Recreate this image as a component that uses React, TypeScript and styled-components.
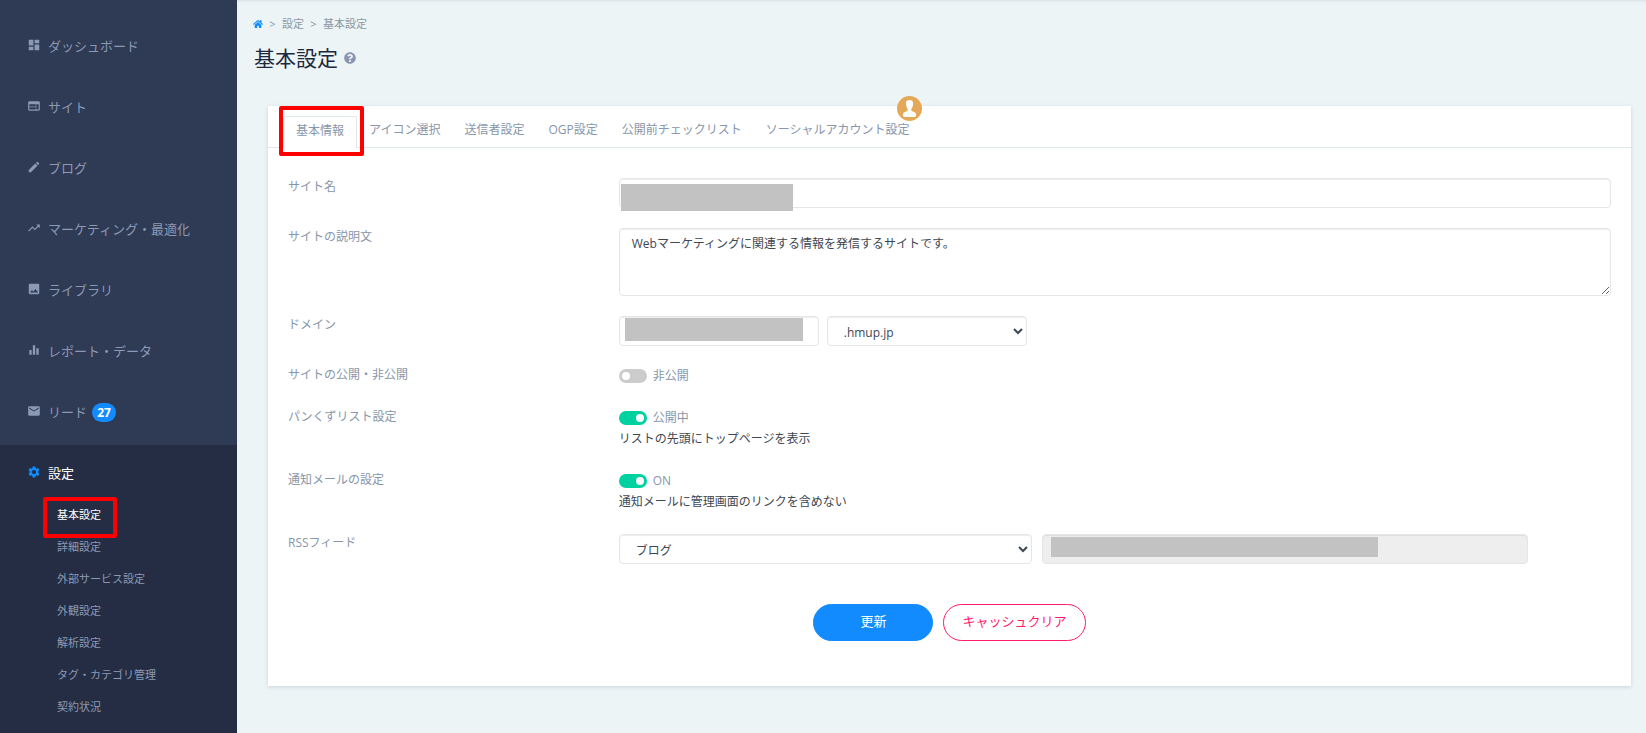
import React from "react";
import styled, { createGlobalStyle, css } from "styled-components";
import {
  MdDashboard,
  MdWeb,
  MdEdit,
  MdTrendingUp,
  MdPhoto,
  MdEqualizer,
  MdEmail,
  MdSettings,
} from "react-icons/md";
import { FaHome, FaQuestionCircle } from "react-icons/fa";

const GlobalStyle = createGlobalStyle`
  *, *::before, *::after { box-sizing: border-box; }
  body {
    margin: 0;
    background: #ecf4f6;
    color: #3d4853;
    font: 12px/18px "Open Sans", "Noto Sans CJK JP", sans-serif;
  }
  button, input, select, textarea { font: inherit; }
  a { color: inherit; text-decoration: none; }
  ul, ol { list-style: none; margin: 0; padding: 0; }
`;

const Layout = styled.div`
  display: flex;
  min-height: 100vh;
`;

const Sidebar = styled.nav`
  flex: 0 0 237px;
  display: flex;
  flex-direction: column;
  padding-top: 18px;
  background: #2f3a54;
  color: #8b99b5;
`;

const NavLink = styled.a<{ $active?: boolean }>`
  display: flex;
  align-items: center;
  height: 61px;
  padding: 0 28px 6px;
  font-size: 13px;
  line-height: 20px;
  color: ${(p) => (p.$active ? "#fff" : "inherit")};

  svg {
    width: 14px;
    height: 14px;
    margin: 0 7px 2px -1px;
    color: ${(p) => (p.$active ? "#128bff" : "inherit")};
  }
`;

const Badge = styled.span`
  margin: 2px 0 0 5px;
  padding: 0 5px;
  min-width: 24px;
  border-radius: 10px;
  background: #128bff;
  color: #fff;
  font-size: 12px;
  font-weight: 700;
  line-height: 19px;
  text-align: center;
`;

const ActiveSection = styled.div`
  flex: 1;
  background: #242d43;
`;

const SubItem = styled.li`
  position: relative;
  height: 32px;
  padding-left: 57px;
  font-size: 11px;
  line-height: 18px;
`;

const SubLink = styled.a<{ $active?: boolean }>`
  color: ${(p) => (p.$active ? "#fff" : "inherit")};
`;

const Highlight = styled.span`
  position: absolute;
  border: 4px solid #f00;
  border-radius: 2px;
  pointer-events: none;
`;

const SubHighlight = styled(Highlight)`
  top: -9px;
  left: 43px;
  width: 74px;
  height: 41px;
`;

const TabHighlight = styled(Highlight)`
  top: -11px;
  left: -5px;
  right: -8px;
  bottom: -8px;
`;

const Main = styled.main`
  flex: 1;
  min-width: 0;
  padding: 15px 15px 47px 16px;
  box-shadow: inset 0 3px 3px -2px rgba(60, 80, 90, 0.12);
`;

const Breadcrumb = styled.ol`
  display: flex;
  align-items: center;
  color: #8b98a5;
  font-size: 11px;

  li {
    display: flex;
    align-items: center;
  }
  li + li::before {
    content: ">";
    width: 19px;
    text-align: center;
  }
  svg {
    display: block;
    width: 10px;
    height: 10px;
    color: #128bff;
  }
`;

const Title = styled.h1`
  display: flex;
  align-items: center;
  gap: 6px;
  margin: 9px 0 32px 1px;
  color: #1d2840;
  font-size: 21px;
  font-weight: 400;
  line-height: 32px;

  svg {
    width: 12px;
    height: 12px;
    color: #8b95ad;
  }
`;

const Card = styled.section`
  position: relative;
  margin-left: 15px;
  background: #fff;
  box-shadow: 0 1px 4px rgba(70, 95, 105, 0.2);
`;

const Tabs = styled.div`
  display: flex;
  padding: 10px 15px 0;
  border-bottom: 1px solid #dfe9ec;
`;

const Tab = styled.button<{ $active?: boolean }>`
  position: relative;
  height: 31px;
  padding: 0 12px 3px;
  border: 0;
  background: none;
  color: #8796aa;
  white-space: nowrap;

  ${(p) =>
    p.$active &&
    css`
      height: 32px;
      margin: 0 0 -1px;
      padding: 0 12px 3px;
      border: 1px solid #dfe9ec;
      border-bottom: 0;
      border-radius: 2px 2px 0 0;
      background: #fff;
    `}
`;

const Avatar = styled.svg`
  position: absolute;
  top: -10px;
  left: 629px;
  width: 25px;
  height: 25px;
`;

const Form = styled.form`
  display: flex;
  flex-direction: column;
  gap: 20px;
  padding: 30px 20px 45px;
`;

const Row = styled.div`
  display: grid;
  grid-template-columns: 25% 75%;
  align-items: start;
`;

const Label = styled.label`
  color: #8796aa;
`;

const Field = styled.div<{ $gap?: number }>`
  display: flex;
  gap: ${(p) => p.$gap ?? 0}px;
`;

const MaskWrap = styled.div<{ $width?: string }>`
  position: relative;
  width: ${(p) => p.$width ?? "100%"};
`;

const Mask = styled.span<{ $x: number; $y: number; $w: number; $h: number }>`
  position: absolute;
  left: ${(p) => p.$x}px;
  top: ${(p) => p.$y}px;
  width: ${(p) => p.$w}px;
  height: ${(p) => p.$h}px;
  background: #c2c2c2;
`;

const control = css`
  display: block;
  border: 1px solid #e4e7ea;
  border-radius: 4px;
  background: #fff;
  box-shadow: inset 0 1px 1px rgba(0, 0, 0, 0.075);
  color: #3d4853;
  outline: 0;
`;

const Input = styled.input`
  ${control}
  width: 100%;
  height: 30px;
  padding: 5px 12px;
  &:disabled {
    background: #eee;
  }
`;

const TextArea = styled.textarea`
  ${control}
  width: 100%;
  height: 68px;
  padding: 6px 12px;
`;

const Select = styled.select<{ $width: string }>`
  ${control}
  width: ${(p) => p.$width};
  height: 30px;
  padding: 2px 0 0 12px;
`;

const Toggle = styled.label`
  display: flex;
  align-items: center;
  gap: 6px;
  height: 22px;
  padding-bottom: 2px;
  color: #8796aa;

  input {
    appearance: none;
    display: flex;
    align-items: center;
    width: 28px;
    height: 14px;
    margin: 0;
    padding: 0 3px;
    border-radius: 7px;
    background: #ccc;
  }
  input::before {
    content: "";
    width: 8px;
    height: 8px;
    border-radius: 50%;
    background: #fff;
  }
  input:checked {
    justify-content: flex-end;
    background: #00d1a0;
  }
`;

const Note = styled.p`
  margin: 0;
  padding-bottom: 3px;
`;

const Actions = styled.div`
  display: flex;
  justify-content: center;
  gap: 10px;
  margin-top: 20px;
`;

const Button = styled.button<{ $outline?: boolean }>`
  min-width: 120px;
  height: 37px;
  padding: 0 18px 4px;
  border: 1px solid ${(p) => (p.$outline ? "#ff1a6c" : "#128bff")};
  border-radius: 19px;
  background: ${(p) => (p.$outline ? "#fff" : "#128bff")};
  color: ${(p) => (p.$outline ? "#ff1a6c" : "#fff")};
  font-size: 13px;
`;

const navItems = [
  { icon: MdDashboard, text: "ダッシュボード" },
  { icon: MdWeb, text: "サイト" },
  { icon: MdEdit, text: "ブログ" },
  { icon: MdTrendingUp, text: "マーケティング・最適化" },
  { icon: MdPhoto, text: "ライブラリ" },
  { icon: MdEqualizer, text: "レポート・データ" },
  { icon: MdEmail, text: "リード", badge: 27 },
];

const subItems = [
  "基本設定",
  "詳細設定",
  "外部サービス設定",
  "外観設定",
  "解析設定",
  "タグ・カテゴリ管理",
  "契約状況",
];

const tabs = [
  "基本情報",
  "アイコン選択",
  "送信者設定",
  "OGP設定",
  "公開前チェックリスト",
  "ソーシャルアカウント設定",
];

export default function App() {
  return (
    <>
      <GlobalStyle />
      <Layout>
        <Sidebar>
          {navItems.map(({ icon: Icon, text, badge }) => (
            <NavLink href="#" key={text}>
              <Icon />
              {text}
              {badge && <Badge>{badge}</Badge>}
            </NavLink>
          ))}
          <ActiveSection>
            <NavLink href="#" $active>
              <MdSettings />
              設定
            </NavLink>
            <ul>
              {subItems.map((text, i) => (
                <SubItem key={text}>
                  <SubLink href="#" $active={i === 0}>
                    {text}
                  </SubLink>
                  {i === 0 && <SubHighlight />}
                </SubItem>
              ))}
            </ul>
          </ActiveSection>
        </Sidebar>
        <Main>
          <Breadcrumb>
            <li>
              <a href="#" aria-label="ホーム">
                <FaHome />
              </a>
            </li>
            <li>設定</li>
            <li>基本設定</li>
          </Breadcrumb>
          <Title>
            基本設定
            <FaQuestionCircle />
          </Title>
          <Card>
            <Tabs role="tablist">
              {tabs.map((text, i) => (
                <Tab
                  key={text}
                  type="button"
                  role="tab"
                  aria-selected={i === 0}
                  $active={i === 0}
                >
                  {text}
                  {i === 0 && <TabHighlight />}
                </Tab>
              ))}
            </Tabs>
            <Avatar viewBox="0 0 25 25" aria-hidden="true">
              <circle cx="12.5" cy="12.5" r="12.5" fill="#e5a858" />
              <path
                fill="#fff"
                d="M12.5 4C10 4 8.800 5.300 8.900 7.600C9 9.800 9.500 11.800 10.800 13.300C10.900 14.300 10.600 14.800 9.800 15.200L7.300 16.300C6.200 16.900 5.900 18.300 5.900 19.700C6 20.600 7 21 8.200 21H16.800C18 21 19 20.600 19.100 19.700C19.100 18.300 18.800 16.900 17.700 16.300L15.200 15.200C14.400 14.800 14.100 14.300 14.200 13.300C15.500 11.800 16 9.800 16.100 7.600C16.200 5.300 15 4 12.500 4Z"
              />
            </Avatar>
            <Form onSubmit={(e) => e.preventDefault()}>
              <Row>
                <Label htmlFor="site-name">サイト名</Label>
                <MaskWrap>
                  <Input id="site-name" type="text" />
                  <Mask $x={2} $y={6} $w={172} $h={27} />
                </MaskWrap>
              </Row>
              <Row>
                <Label htmlFor="description">サイトの説明文</Label>
                <TextArea
                  id="description"
                  defaultValue="Webマーケティングに関連する情報を発信するサイトです。"
                />
              </Row>
              <Row>
                <Label htmlFor="domain">ドメイン</Label>
                <Field $gap={8}>
                  <MaskWrap $width="200px">
                    <Input id="domain" type="text" />
                    <Mask $x={6} $y={2} $w={178} $h={23} />
                  </MaskWrap>
                  <Select $width="200px" aria-label="ドメイン">
                    <option>.hmup.jp</option>
                  </Select>
                </Field>
              </Row>
              <Row>
                <Label htmlFor="publish">サイトの公開・非公開</Label>
                <Toggle>
                  <input id="publish" type="checkbox" />
                  非公開
                </Toggle>
              </Row>
              <Row>
                <Label htmlFor="crumbs">パンくずリスト設定</Label>
                <div>
                  <Toggle>
                    <input id="crumbs" type="checkbox" defaultChecked />
                    公開中
                  </Toggle>
                  <Note>リストの先頭にトップページを表示</Note>
                </div>
              </Row>
              <Row>
                <Label htmlFor="notify">通知メールの設定</Label>
                <div>
                  <Toggle>
                    <input id="notify" type="checkbox" defaultChecked />
                    ON
                  </Toggle>
                  <Note>通知メールに管理画面のリンクを含めない</Note>
                </div>
              </Row>
              <Row>
                <Label htmlFor="rss">RSSフィード</Label>
                <Field $gap={10}>
                  <Select id="rss" $width="calc(100% * 5 / 12)">
                    <option>ブログ</option>
                  </Select>
                  <MaskWrap $width="49%">
                    <Input type="text" disabled aria-label="RSSフィード" />
                    <Mask $x={9} $y={3} $w={327} $h={20} />
                  </MaskWrap>
                </Field>
              </Row>
              <Actions>
                <Button type="submit">更新</Button>
                <Button type="button" $outline>
                  キャッシュクリア
                </Button>
              </Actions>
            </Form>
          </Card>
        </Main>
      </Layout>
    </>
  );
}
